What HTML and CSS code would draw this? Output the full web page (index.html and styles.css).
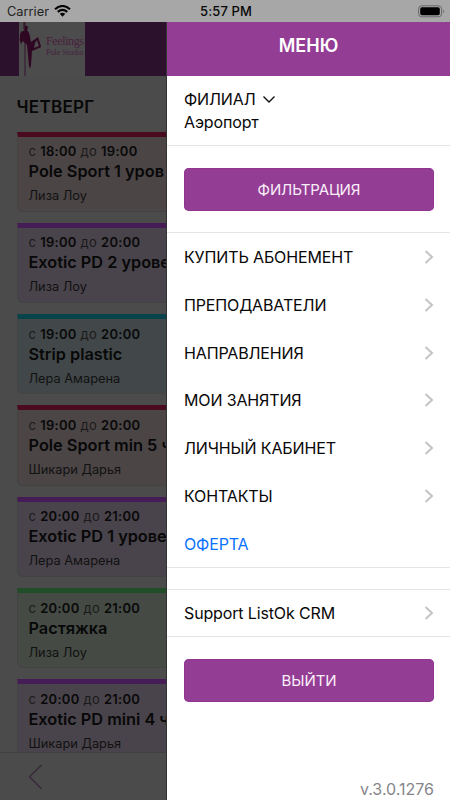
FILE: index.html
```
<!DOCTYPE html>
<html lang="ru">
<head>
<meta charset="utf-8">
<title>Меню</title>
<link rel="stylesheet" href="styles.css">
</head>
<body>
<div class="phone">
  <header class="status">
    <div class="carrier"><span>Carrier</span>
      <svg width="17" height="12" viewBox="0 0 17 12"><path d="M1 4.2Q8.500-2.200 16 4.200M3.700 6.900Q8.500 3 13.300 6.900" fill="none" stroke="#050505" stroke-width="2.100"/><path d="M5.700 8.800Q8.500 6.600 11.300 8.800L8.500 11.700Z" fill="#050505"/></svg>
    </div>
    <div class="clock">5:57 PM</div>
    <svg class="battery" width="28" height="13" viewBox="0 0 28 13"><rect x="1.600" y=".8" width="23" height="11" rx="3" fill="none" stroke="#686868"/><rect x="3.200" y="2.300" width="19.600" height="8" rx="1.700"/><path d="M26 4.400q2 1.900 0 3.800z" fill="#686868"/></svg>
  </header>
  <div class="body">
    <main class="schedule">
      <div class="brand">
        <svg class="logo" width="66" height="54" viewBox="0 0 66 54"><rect width="66" height="54" fill="#4c4c4d"/><path d="M6 0V54" stroke="#391d32" stroke-width="1.200"/><path d="M6 4q3-1 3 2l-1 2q3 3 3 7l1 5 7-5 3 9q0 2-2 2l-7 3-1 14-1 4-1-3-1-11-1-10-4-4-2 3q-2-4-1-9 1-5 5-4z" fill="#300723"/><path d="M18 18l2 6-5 2 1-5z" fill="#4c4c4d"/><path d="M5 0v7l3 3" fill="none" stroke="#300723"/><text class="logo-name" x="27" y="23" textLength="38">Feelings</text><text class="logo-sub" x="27" y="33" textLength="37.500">Pole Studio</text></svg>
      </div>
      <h2>ЧЕТВЕРГ</h2>
      <div class="cards">
        <article class="card red"><p class="time">с <b>18:00</b> до <b>19:00</b></p><h3>Pole Sport 1 уров</h3><p class="who">Лиза Лоу</p></article>
        <article class="card violet"><p class="time">с <b>19:00</b> до <b>20:00</b></p><h3>Exotic PD 2 урове</h3><p class="who">Лиза Лоу</p></article>
        <article class="card cyan"><p class="time">с <b>19:00</b> до <b>20:00</b></p><h3>Strip plastic</h3><p class="who">Лера Амарена</p></article>
        <article class="card red"><p class="time">с <b>19:00</b> до <b>20:00</b></p><h3>Pole Sport min 5 ч</h3><p class="who">Шикари Дарья</p></article>
        <article class="card violet"><p class="time">с <b>20:00</b> до <b>21:00</b></p><h3>Exotic PD 1 урове</h3><p class="who">Лера Амарена</p></article>
        <article class="card green"><p class="time">с <b>20:00</b> до <b>21:00</b></p><h3>Растяжка</h3><p class="who">Лиза Лоу</p></article>
        <article class="card violet"><p class="time">с <b>20:00</b> до <b>21:00</b></p><h3>Exotic PD mini 4 ч</h3><p class="who">Шикари Дарья</p></article>
      </div>
      <footer class="toolbar"><svg width="15" height="26" viewBox="0 0 15 26"><path d="M13.500 1L1.500 12.800L13.500 24.700" fill="none" stroke="#38283a" stroke-width="1.300"/></svg></footer>
    </main>
    <aside class="menu">
      <div class="title">МЕНЮ</div>
      <section class="branch">
        <div class="branch-label"><span>ФИЛИАЛ</span><svg width="14" height="9" viewBox="0 0 14 9"><path d="M1.500 1.500L7 7L12.500 1.500" fill="none" stroke="#111" stroke-width="1.400"/></svg></div>
        <div class="branch-name">Аэропорт</div>
      </section>
      <section class="filter"><button>ФИЛЬТРАЦИЯ</button></section>
      <nav class="links">
        <a><span>КУПИТЬ АБОНЕМЕНТ</span><svg class="chev" viewBox="0 0 10 16"><path d="M1.500 2L8 8L1.500 14"/></svg></a>
        <a><span>ПРЕПОДАВАТЕЛИ</span><svg class="chev" viewBox="0 0 10 16"><path d="M1.500 2L8 8L1.500 14"/></svg></a>
        <a><span>НАПРАВЛЕНИЯ</span><svg class="chev" viewBox="0 0 10 16"><path d="M1.500 2L8 8L1.500 14"/></svg></a>
        <a><span>МОИ ЗАНЯТИЯ</span><svg class="chev" viewBox="0 0 10 16"><path d="M1.500 2L8 8L1.500 14"/></svg></a>
        <a><span>ЛИЧНЫЙ КАБИНЕТ</span><svg class="chev" viewBox="0 0 10 16"><path d="M1.500 2L8 8L1.500 14"/></svg></a>
        <a><span>КОНТАКТЫ</span><svg class="chev" viewBox="0 0 10 16"><path d="M1.500 2L8 8L1.500 14"/></svg></a>
        <a class="offer"><span>ОФЕРТА</span></a>
      </nav>
      <div class="support"><span>Support ListOk CRM</span><svg class="chev" viewBox="0 0 10 16"><path d="M1.500 2L8 8L1.500 14"/></svg></div>
      <section class="logout"><button>ВЫЙТИ</button></section>
      <div class="version">v.3.0.1276</div>
    </aside>
  </div>
</div>
</body>
</html>
```
FILE: styles.css
```
* { box-sizing: border-box; }
body, h2, h3, p { margin: 0; }
body { font-family: Inter, sans-serif; color: #080808; }
.phone { width: 450px; height: 800px; overflow: hidden; display: flex; flex-direction: column; }
.status { height: 22px; flex: none; background: #a7a7a7; display: grid; grid-template-columns: 1fr auto 1fr; align-items: center; padding: 0 5px 0 7px; font-size: 13.5px; }
.carrier { display: flex; align-items: center; gap: 5px; }
.carrier span { font-size: 12.8px; color: #222; }
.clock { font-weight: 500; font-size: 13px; letter-spacing: .1px; }
.battery { justify-self: end; }
.body { flex: 1; min-height: 0; display: flex; }
.schedule { width: 167px; flex: none; background: #4b4b4b; overflow: hidden; display: flex; flex-direction: column; border-right: 1px solid #333; }
.brand { height: 54px; flex: none; background: #2c112c; padding-left: 19px; }
.logo { display: block; }
.logo-name { font: 12px "Liberation Serif", serif; fill: #49203d; }
.logo-sub { font: 8.5px "Liberation Serif", serif; fill: #45243c; }
h2 { font-size: 17px; line-height: 22px; font-weight: 600; letter-spacing: .3px; padding: 20px 0 0 16.5px; height: 55.5px; flex: none; }
.cards { flex: 1; min-height: 0; overflow: hidden; padding-left: 16.5px; }
.card { width: 417px; height: 80.2px; margin-bottom: 11.13px; border: 1px solid #434343; border-top: 5px solid; border-radius: 0 0 6px 6px; padding: 5.5px 0 0 11px; white-space: nowrap; }
.red { border-top-color: #490b1d; background: #4b4546; }
.violet { border-top-color: #451c55; background: #49444b; }
.cyan { border-top-color: #06434a; background: #424849; }
.green { border-top-color: #214d28; background: #454a45; }
.time { font-size: 13px; line-height: 18px; color: #1a1a1a; letter-spacing: .28px; }
.time b { font-weight: 600; color: #090909; }
h3 { font-size: 16.3px; line-height: 23px; font-weight: 600; }
.who { font-size: 12.8px; line-height: 26px; color: #111; }
.toolbar { height: 48px; flex: none; border-top: 1px solid #404040; padding: 11px 0 0 28px; }
.menu { flex: 1; background: #fff; display: flex; flex-direction: column; color: #080808; font-size: 16px; letter-spacing: -.14px; }
.title { height: 54px; background: #943d94; color: #fff; text-align: center; font-weight: 600; font-size: 18px; line-height: 48px; letter-spacing: 0; }
.branch { height: 70px; padding: 12px 16px 0 17px; border-bottom: 1px solid #e4e4e7; line-height: 23px; }
.branch-label { display: flex; align-items: center; gap: 6px; }
.filter { height: 87px; padding: 21.5px 16px 0 17px; border-bottom: 1px solid #e4e4e7; }
button { display: block; width: 100%; height: 43px; border: 0; border-radius: 5px; padding: 0; background: #943d94; box-shadow: inset 0 0 0 .5px #8e2f8e; color: #faeffa; font: 15px Inter, sans-serif; letter-spacing: -.1px; }
.links { height: 335px; border-bottom: 1px solid #e4e4e7; }
.links a, .support { height: 47.85px; display: flex; align-items: center; justify-content: space-between; padding: 0 16px 0 17px; }
.links .offer { color: #0a72ff; }
.chev { width: 10px; height: 16px; fill: none; stroke: #c4c4c7; stroke-width: 2; }
.support { height: 48px; margin-top: 21px; border-top: 1px solid #e4e4e7; border-bottom: 1px solid #e4e4e7; }
.logout { padding: 22px 16px 0 17px; }
.version { margin-top: auto; padding-right: 16px; text-align: right; color: #85858a; line-height: 22px; letter-spacing: 0; }
```
